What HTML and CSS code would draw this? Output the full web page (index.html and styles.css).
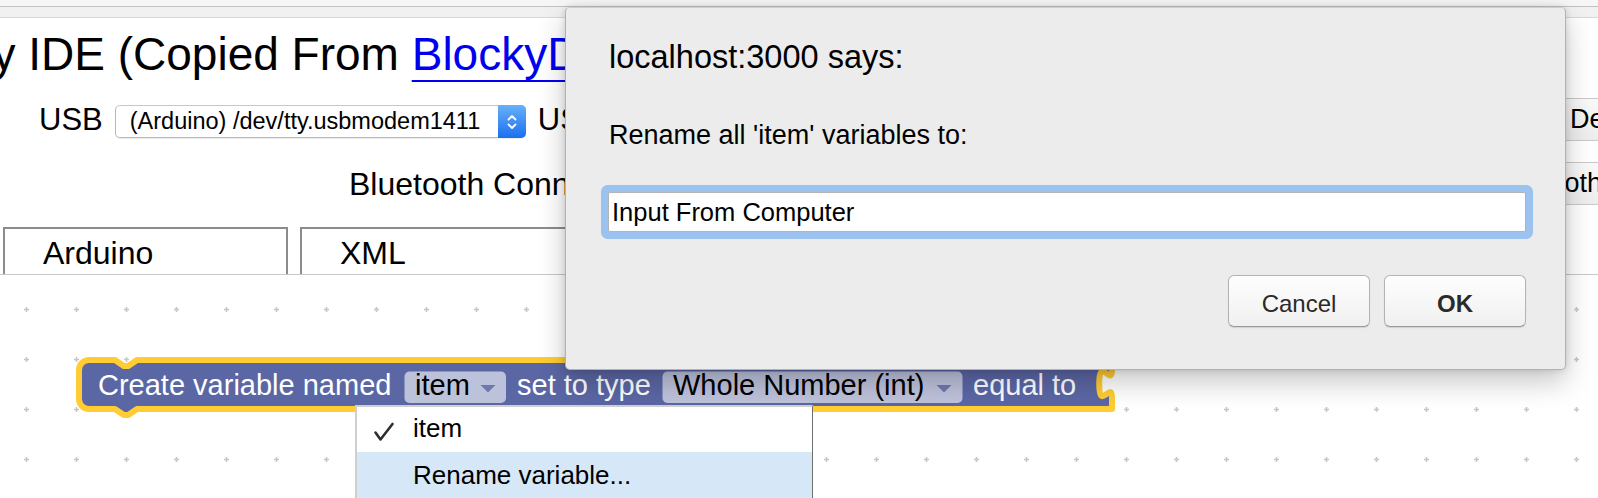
FILE: index.html
```html
<!DOCTYPE html>
<html lang="en">
<head>
<meta charset="utf-8">
<title>Blocky IDE (Copied From BlockyDuino)</title>
<link rel="stylesheet" href="styles.css">
</head>
<body>
<div class="chrome">
  <div class="chrome-top"></div>
  <div class="chrome-bar"></div>
</div>

<h1 class="title">Blocky IDE (Copied From <a class="title-link" href="#">BlockyDuino</a>)</h1>

<div class="row row-usb">
  <span class="label">USB</span>
  <div class="select">
    <span class="select-text">(Arduino) /dev/tty.usbmodem1411</span>
    <span class="stepper">
      <svg width="12" height="24" viewBox="0 0 12 24"><path d="M2.5 9.5 L6 6 L9.5 9.5 M2.5 14.5 L6 18 L9.5 14.5" fill="none" stroke="#fff" stroke-width="1.8" stroke-linecap="round" stroke-linejoin="round"/></svg>
    </span>
  </div>
  <span class="label label-next">USB Baud Rate</span>
  <button class="side-btn side-btn-deploy">Deploy</button>
</div>

<div class="row row-bt">
  <span class="label label-bt">Bluetooth Connection:</span>
  <button class="side-btn side-btn-bt">Connect Bluetooth</button>
</div>

<div class="tabs">
  <div class="tab">Arduino</div>
  <div class="tab">XML</div>
</div>

<div class="workspace">
  <svg class="ws-svg" width="1598" height="223" viewBox="0 0 1598 223">
    <defs>
      <pattern id="grid" x="0" y="0" width="50" height="50" patternUnits="userSpaceOnUse">
        <path d="M24 34.5 H29 M26.5 32 V37" stroke="#c6c6c6" stroke-width="1.6" fill="none"/>
      </pattern>
    </defs>
    <rect x="0" y="0" width="1598" height="223" fill="url(#grid)"/>
    <g class="block">
      <path d="M79,95 A10,10 0 0 1 89,85 H115 l8.8,6 h4.4 l8.8,-6 H1112 v9.5 c0,19 -12.8,-15.2 -12.8,14.25 s12.8,-4.75 12.8,14.25 V134 H137 l-8.8,6 h-4.4 l-8.8,-6 H89 A10,10 0 0 1 79,124 Z" fill="#5b67a5" stroke="#ffcc33" stroke-width="6" stroke-linejoin="round"/>
      <rect x="404.5" y="96.5" width="101.5" height="31.5" rx="5" fill="#bdc2db"/>
      <rect x="662.5" y="96.5" width="300" height="31.5" rx="5" fill="#bdc2db"/>
      <text class="blk-text blk-white" x="98" y="120">Create variable named</text>
      <text class="blk-text" x="415" y="120">item</text>
      <path d="M480.5,110 H495.5 L488,117.5 Z" fill="#6f78b0"/>
      <text class="blk-text blk-white" x="517" y="120">set to type</text>
      <text class="blk-text" x="673" y="120">Whole Number (int)</text>
      <path d="M936.5,110 H951.5 L944,117.5 Z" fill="#6f78b0"/>
      <text class="blk-text blk-white" x="973" y="120">equal to</text>
    </g>
  </svg>

  <div class="menu">
    <div class="menu-item">
      <svg class="check" width="22" height="20" viewBox="0 0 22 20"><path d="M2.5 10.5 L7.5 17.5 L19.5 2" fill="none" stroke="#2e2e2e" stroke-width="2.6" stroke-linecap="round" stroke-linejoin="round"/></svg>
      item
    </div>
    <div class="menu-item menu-item-active">Rename variable...</div>
  </div>
</div>

<div class="dialog">
  <div class="dialog-title">localhost:3000 says:</div>
  <div class="dialog-message">Rename all 'item' variables to:</div>
  <div class="dialog-input">Input From Computer</div>
  <div class="dialog-buttons">
    <button class="dlg-btn">Cancel</button>
    <button class="dlg-btn dlg-btn-ok">OK</button>
  </div>
</div>
</body>
</html>
```
FILE: styles.css
```css
* {
  box-sizing: border-box;
}

html,
body {
  margin: 0;
  padding: 0;
  overflow: hidden;
}

body {
  position: relative;
  width: 1598px;
  height: 498px;
  background: #ffffff;
  color: #000000;
  font-family: "Liberation Sans", Arial, Helvetica, sans-serif;
}

/* top browser strip */
.chrome-top {
  height: 7px;
  background: #f6f6f6;
  border-bottom: 1px solid #c2c2c2;
}

.chrome-bar {
  height: 11px;
  background: #f1f1f1;
  border-bottom: 1px solid #d8d8d8;
}

/* heading */
.title {
  margin: 10px 0 0 -120px;
  font-size: 46px;
  font-weight: normal;
  line-height: 53px;
  white-space: nowrap;
}

.title-link {
  color: #0000ee;
  text-decoration: underline;
  text-decoration-thickness: 2px;
  text-underline-offset: 10px;
}

/* toolbar rows */
.row {
  display: flex;
  align-items: center;
  height: 43px;
  margin-top: 21px;
  white-space: nowrap;
}

.row-usb {
  margin-top: 17px;
  padding-left: 39px;
}

.row-bt {
  padding-left: 349px;
}

.label {
  font-size: 31px;
  line-height: 34px;
}

.label-bt {
  font-size: 32px;
}

.label-next {
  margin-left: 12px;
}

.select {
  display: flex;
  align-items: center;
  flex-shrink: 0;
  width: 411px;
  height: 33px;
  margin-top: 4px;
  margin-left: 12px;
  padding-left: 14px;
  background: #ffffff;
  border: 1px solid #b8b8b8;
  border-top-color: #c8c8c8;
  border-radius: 5px;
  box-shadow: 0 1px 1px rgba(0, 0, 0, 0.08);
  font-size: 23.5px;
  line-height: 27px;
}

.select-text {
  flex: 1;
}

.stepper {
  display: flex;
  align-items: center;
  justify-content: center;
  align-self: stretch;
  width: 28px;
  margin: -1px -1px -1px 0;
  background: linear-gradient(#69b0fb, #1a6ff0);
  border-radius: 0 5px 5px 0;
}

.side-btn {
  flex-shrink: 0;
  height: 43px;
  margin-left: auto;
  padding: 0 10px;
  background: linear-gradient(#f9f9f9, #ededed);
  border: 1px solid #c9c9c9;
  border-radius: 0;
  color: #000000;
  font-family: "Liberation Sans", Arial, Helvetica, sans-serif;
  font-size: 27px;
  line-height: 31px;
  white-space: nowrap;
}

.side-btn-deploy {
  margin-right: -67px;
}

.side-btn-bt {
  margin-right: -15px;
}

/* tabs */
.tabs {
  display: flex;
  gap: 12px;
  height: 48px;
  margin-top: 22px;
  padding-left: 3px;
  overflow: hidden;
  border-bottom: 1px solid #c8c8c8;
}

.tab {
  flex-shrink: 0;
  width: 285px;
  height: 80px;
  padding: 6px 0 0 38px;
  border: 2px solid #8c8c8c;
  font-size: 32px;
  line-height: 37px;
}

/* blockly workspace */
.workspace {
  position: relative;
  height: 223px;
}

.ws-svg {
  display: block;
}

.blk-text {
  font-family: "Liberation Sans", Arial, Helvetica, sans-serif;
  font-size: 29px;
  fill: #000000;
}

.blk-white {
  fill: #ffffff;
}

.menu {
  position: absolute;
  left: 355px;
  top: 130px;
  width: 458px;
  height: 100px;
  background: #ffffff;
  border: 2px solid #cfcfcf;
  border-right: 1px solid #6e6e6e;
  border-bottom: none;
  font-size: 26px;
}

.menu-item {
  position: relative;
  padding: 6px 0 9px 56px;
  line-height: 30px;
  white-space: nowrap;
}

.menu-item-active {
  padding-top: 8px;
  background: #d6e8f7;
}

.check {
  position: absolute;
  left: 16px;
  top: 15px;
}

/* alert dialog */
.dialog {
  position: absolute;
  left: 565px;
  top: 7px;
  width: 1001px;
  height: 363px;
  padding: 0 39px 0 42px;
  background: #ececec;
  border: 1px solid #b2b2b2;
  border-top-color: #cfcfcf;
  border-radius: 5px;
  box-shadow: 0 12px 28px rgba(0, 0, 0, 0.22), 0 0 7px rgba(0, 0, 0, 0.14);
}

.dialog-title {
  margin-top: 30px;
  padding-left: 1px;
  font-size: 32.5px;
  line-height: 38px;
}

.dialog-message {
  margin-top: 44px;
  padding-left: 1px;
  font-size: 27px;
  line-height: 31px;
}

.dialog-input {
  height: 40px;
  margin-top: 41px;
  padding-left: 3px;
  background: #ffffff;
  border: 1px solid #b4b4b4;
  border-radius: 2px;
  box-shadow: 0 0 0 7px #9cc3ef;
  font-size: 25.5px;
  line-height: 38px;
}

.dialog-buttons {
  display: flex;
  justify-content: flex-end;
  gap: 14px;
  margin-top: 43px;
}

.dlg-btn {
  width: 142px;
  height: 52px;
  padding: 5px 0 0;
  background: linear-gradient(#fefefe, #f0f0f0);
  border: 1px solid #b3b3b3;
  border-bottom-color: #999999;
  border-radius: 6px;
  box-shadow: 0 1px 1px rgba(0, 0, 0, 0.12);
  color: #2a2a2a;
  font-family: "Liberation Sans", Arial, Helvetica, sans-serif;
  font-size: 24px;
}

.dlg-btn-ok {
  font-weight: bold;
}
```
